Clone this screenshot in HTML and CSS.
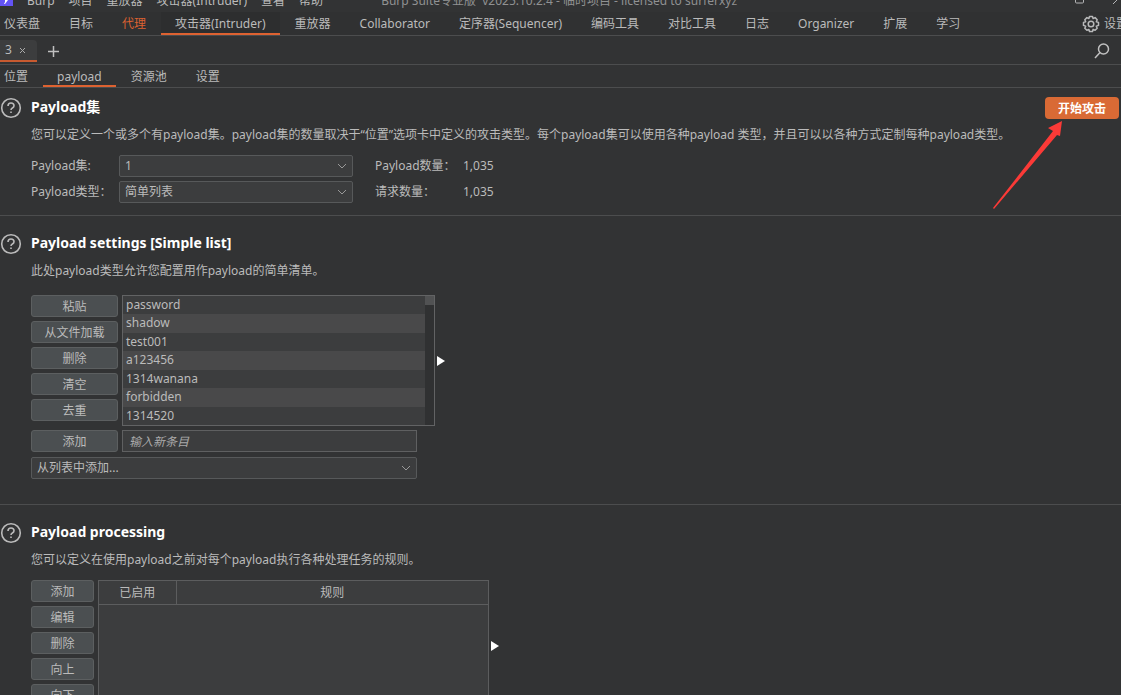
FILE: index.html
```html
<!DOCTYPE html>
<html lang="zh-CN">
<head>
<meta charset="utf-8">
<title>Burp Suite专业版</title>
<link rel="stylesheet" href="styles.css">
</head>
<body>
<div class="app">
  <header class="titlebar">
    <svg class="logo" width="13" height="12" viewBox="0 0 13 12" aria-hidden="true"><path fill="#6353f5" d="M0 0h13v6H0z"/><path fill="#fff" d="M5 0h3L5 4H4l1-2z"/></svg>
    <nav class="menu">
      <button>Burp</button><button>项目</button><button>重放器</button><button>攻击器(Intruder)</button><button>查看</button><button>帮助</button>
    </nav>
    <span class="window-title">Burp Suite专业版&nbsp; v2025.10.2.4 - 临时项目 - licensed to surferxyz</span>
    <svg class="window-controls" width="48" height="16" viewBox="0 0 48 16" fill="none" stroke="#b4b5b6" aria-hidden="true"><path d="M2.500 4v6q0 1 1 1h6q1 0 1-1V4M40 12l8-8 8 8"/></svg>
  </header>

  <nav class="tabs main-tabs">
    <button class="tab">仪表盘</button>
    <button class="tab">目标</button>
    <button class="tab alert">代理</button>
    <button class="tab active">攻击器(Intruder)</button>
    <button class="tab">重放器</button>
    <button class="tab">Collaborator</button>
    <button class="tab">定序器(Sequencer)</button>
    <button class="tab">编码工具</button>
    <button class="tab">对比工具</button>
    <button class="tab">日志</button>
    <button class="tab">Organizer</button>
    <button class="tab">扩展</button>
    <button class="tab">学习</button>
    <button class="settings">
      <svg width="18" height="18" viewBox="0 0 18 18" fill="none" stroke="#b8b9ba" stroke-width="1.500" stroke-linejoin="round" aria-hidden="true"><circle cx="9" cy="9" r="2.800"/><path d="M7.500 1.500h3l.6 2 2-.9 2.100 2.100-.9 2 2.200.7v3l-2.200.8.9 2-2.100 2.100-2-.9-.6 2.100h-3l-.6-2.100-2 .9-2.100-2.100.9-2-2.200-.8v-3l2.200-.7-.9-2 2.100-2.100 2 .9z"/></svg>
      <span>设置</span>
    </button>
  </nav>

  <div class="attack-bar">
    <div class="attack-tab"><span>3</span><button class="close" aria-label="关闭"><svg width="7" height="7" viewBox="0 0 7 7" stroke="#aaa" aria-hidden="true"><path d="M1 1l5 5M6 1L1 6"/></svg></button></div>
    <button class="plain" aria-label="新建"><svg width="13" height="13" viewBox="0 0 13 13" stroke="#c0c0c0" stroke-width="1.500" aria-hidden="true"><path d="M6.500 1v11M1 6.500h11"/></svg></button>
    <button class="plain search" aria-label="搜索"><svg width="16" height="16" viewBox="0 0 16 16" fill="none" stroke="#c0c0c0" stroke-width="1.500" aria-hidden="true"><circle cx="9.500" cy="6" r="5"/><path d="M6 9.500L1 15"/></svg></button>
  </div>

  <nav class="tabs sub-tabs">
    <button class="tab">位置</button>
    <button class="tab active">payload</button>
    <button class="tab">资源池</button>
    <button class="tab">设置</button>
  </nav>

  <main>
    <section class="panel sets">
      <button class="help" aria-label="帮助"><svg width="22" height="22" viewBox="0 0 22 22" fill="none" stroke="#bbb" aria-hidden="true"><circle cx="11" cy="11" r="9.300" stroke-width="1.600"/><path stroke-width="1.600" d="M8 9q0-3 3-3t3 2.700q0 1.400-1.600 2.300Q11 11.800 11 13"/><path stroke-width="1.600" d="M11 14.500v1.600"/></svg></button>
      <div class="content">
        <div class="heading"><h2>Payload集</h2><button class="start">开始攻击</button></div>
        <p>您可以定义一个或多个有payload集。payload集的数量取决于“位置”选项卡中定义的攻击类型。每个payload集可以使用各种payload 类型，并且可以以各种方式定制每种payload类型。</p>
        <div class="form">
          <label for="set">Payload集:</label>
          <div class="dropdown"><select id="set"><option>1</option></select><svg width="10" height="6" viewBox="0 0 10 6" fill="none" stroke="#999" aria-hidden="true"><path d="M1 1l4 4 4-4"/></svg></div>
          <span class="count">Payload数量：</span><span>1,035</span>
          <label for="type">Payload类型：</label>
          <div class="dropdown"><select id="type"><option>简单列表</option></select><svg width="10" height="6" viewBox="0 0 10 6" fill="none" stroke="#999" aria-hidden="true"><path d="M1 1l4 4 4-4"/></svg></div>
          <span class="count">请求数量：</span><span>1,035</span>
        </div>
      </div>
      <svg class="pointer" width="74" height="90" viewBox="0 0 74 90" aria-hidden="true"><path fill="#fb3a37" d="M71 1L57 8l5 3L2 88l1 1L66 15l3 1z"/></svg>
    </section>

    <section class="panel list-settings">
      <button class="help" aria-label="帮助"><svg width="22" height="22" viewBox="0 0 22 22" fill="none" stroke="#bbb" aria-hidden="true"><circle cx="11" cy="11" r="9.300" stroke-width="1.600"/><path stroke-width="1.600" d="M8 9q0-3 3-3t3 2.700q0 1.400-1.600 2.300Q11 11.800 11 13"/><path stroke-width="1.600" d="M11 14.500v1.600"/></svg></button>
      <div class="content">
        <div class="heading"><h2>Payload settings [Simple list]</h2></div>
        <p>此处payload类型允许您配置用作payload的简单清单。</p>
        <div class="list-row">
          <div class="buttons">
            <button class="btn">粘贴</button>
            <button class="btn">从文件加载</button>
            <button class="btn">删除</button>
            <button class="btn">清空</button>
            <button class="btn">去重</button>
          </div>
          <div class="listbox">
            <ul>
              <li>password</li><li>shadow</li><li>test001</li><li>a123456</li><li>1314wanana</li><li>forbidden</li><li>1314520</li>
            </ul>
            <div class="scrollbar"><div class="thumb"></div></div>
          </div>
          <button class="expand" aria-label="展开"><svg width="8" height="10" viewBox="0 0 8 10" aria-hidden="true"><path fill="#fff" d="M0 0l8 5-8 5z"/></svg></button>
        </div>
        <div class="add-row">
          <button class="btn">添加</button>
          <input type="text" placeholder="输入新条目" aria-label="输入新条目">
        </div>
        <div class="dropdown from-list"><select aria-label="从列表中添加"><option>从列表中添加...</option></select><svg width="10" height="6" viewBox="0 0 10 6" fill="none" stroke="#999" aria-hidden="true"><path d="M1 1l4 4 4-4"/></svg></div>
      </div>
    </section>

    <section class="panel processing">
      <button class="help" aria-label="帮助"><svg width="22" height="22" viewBox="0 0 22 22" fill="none" stroke="#bbb" aria-hidden="true"><circle cx="11" cy="11" r="9.300" stroke-width="1.600"/><path stroke-width="1.600" d="M8 9q0-3 3-3t3 2.700q0 1.400-1.600 2.300Q11 11.800 11 13"/><path stroke-width="1.600" d="M11 14.500v1.600"/></svg></button>
      <div class="content">
        <div class="heading"><h2>Payload processing</h2></div>
        <p>您可以定义在使用payload之前对每个payload执行各种处理任务的规则。</p>
        <div class="list-row">
          <div class="buttons">
            <button class="btn">添加</button>
            <button class="btn">编辑</button>
            <button class="btn">删除</button>
            <button class="btn">向上</button>
            <button class="btn">向下</button>
          </div>
          <div class="rules">
            <table>
              <thead><tr><th class="enabled">已启用</th><th>规则</th></tr></thead>
            </table>
          </div>
          <button class="expand" aria-label="展开"><svg width="8" height="10" viewBox="0 0 8 10" aria-hidden="true"><path fill="#fff" d="M0 0l8 5-8 5z"/></svg></button>
        </div>
      </div>
    </section>
  </main>
</div>
</body>
</html>
```

FILE: styles.css
```css
* { box-sizing: border-box; }

body {
  margin: 0;
  background: #323334;
  color: #bbb;
  font: 12px/20px "Noto Sans", "Noto Sans CJK SC", sans-serif;
}

button, input, select {
  margin: 0;
  padding: 0;
  border: 0;
  background: none;
  color: inherit;
  font: inherit;
}

svg { display: block; flex: none; }
h2, p, ul { margin: 0; padding: 0; }

.app {
  display: flex;
  flex-direction: column;
  height: 100vh;
  overflow: hidden;
}

/* title bar */
.titlebar {
  display: flex;
  align-items: flex-end;
  flex: none;
  height: 12px;
  overflow: hidden;
  white-space: nowrap;
}
.menu { display: flex; gap: 14px; margin: 0 58px 0 14px; }
.menu, .window-title { margin-bottom: 1px; }
.window-title { color: #909192; }
.window-controls { margin-left: auto; margin-bottom: 4px; }

/* tab rows */
.tabs {
  display: flex;
  flex: none;
  gap: 1px;
  border-bottom: 1px solid #4c4d4e;
  white-space: nowrap;
}
.tab { padding: 2px 14px 0; border-bottom: 2px solid transparent; }
.tab:first-child { padding-left: 4px; }
.tab.active { border-bottom-color: #de6231; }
.tab.alert { color: #de6231; }
.main-tabs { height: 24px; background: #303132; }
.sub-tabs { height: 23px; }
.main-tabs .active { background: #2d2e2f; }
.settings {
  display: flex;
  align-items: center;
  gap: 4px;
  width: 39px;
  margin-left: auto;
  overflow: hidden;
}

.attack-bar {
  display: flex;
  align-items: center;
  flex: none;
  gap: 10px;
  height: 29px;
  padding: 2px 11px 0 0;
  border-bottom: 1px solid #4c4d4e;
}
.attack-tab {
  display: flex;
  align-items: center;
  gap: 7px;
  height: 22px;
  padding: 0 11px 0 5px;
  border-bottom: 2px solid #c85a30;
  border-radius: 0 4px 0 0;
  background: #3c3d3e;
}
.search { margin-left: auto; }

/* panels */
.panel {
  position: relative;
  display: flex;
  gap: 9px;
  padding: 17px 2px 25px 0;
  border-bottom: 1px solid #4c4d4e;
}
.sets { padding-top: 9px; padding-bottom: 12px; }
.help { align-self: flex-start; }
.content { flex: 1; min-width: 0; }
.heading {
  display: flex;
  align-items: flex-start;
  justify-content: space-between;
  height: 20px;
  margin-bottom: 8px;
}
h2 { color: #fff; font-size: 14px; line-height: 20px; }
.start {
  height: 22px;
  padding: 1px 13px 0;
  border-radius: 4px;
  background: #d96a35;
  color: #fff;
  font-weight: bold;
}
.pointer { position: absolute; top: 32px; right: 56px; }

.form {
  display: grid;
  grid-template-columns: 88px 234px 110px auto;
  justify-content: start;
  align-items: center;
  row-gap: 4px;
  margin-top: 10px;
}
.count { padding-left: 22px; white-space: nowrap; }
.form label { white-space: nowrap; }

.dropdown { display: grid; align-items: center; }
.dropdown > * { grid-area: 1 / 1; }
.dropdown svg { justify-self: end; margin-right: 6px; pointer-events: none; }
select {
  width: 100%;
  height: 22px;
  padding: 0 5px;
  border: 1px solid #57595a;
  border-radius: 2px;
  background: #3c3d3e;
  appearance: none;
}

.btn {
  height: 22px;
  padding-top: 1px;
  border: 1px solid #5c5f60;
  border-radius: 3px;
  background: #4b4f51;
}
.list-row { display: flex; gap: 4px; }
.buttons { display: grid; gap: 4px; width: 87px; align-content: start; }
.expand { width: 8px; }

.list-settings .list-row { margin-top: 14px; }
.listbox {
  display: flex;
  width: 313px;
  height: 131px;
  border: 1px solid #626364;
}
.listbox ul {
  display: grid;
  flex: 1;
  grid-auto-rows: 1fr;
  list-style: none;
  background: #3c3d3e;
  line-height: 18px;
}
.listbox li { padding-left: 3px; }
.listbox li:nth-child(even) { background: #49494a; }
.scrollbar { width: 9px; background: #303132; }
.thumb { height: 9px; background: #515253; }
.list-settings .expand { margin-left: -2px; }

.add-row {
  display: grid;
  grid-template-columns: 87px 295px;
  gap: 4px;
  margin: 4px 0 5px;
}
.add-row input {
  height: 22px;
  padding: 0 6px;
  border: 1px solid #5f6061;
  background: #3c3d3e;
}
.add-row input::placeholder { color: #aaa; font-style: italic; opacity: 1; }
.from-list { width: 386px; }

.processing { border-bottom: 0; }
.processing .list-row { margin-top: 10px; }
.processing .buttons { width: 63px; }
.rules {
  width: 391px;
  min-height: 131px;
  border: 1px solid #5c5d5e;
  background: #3c3d3e;
}
table { width: 100%; border-collapse: collapse; }
th {
  height: 23px;
  padding: 2px 0 0;
  border-bottom: 1px solid #5c5d5e;
  font-weight: normal;
}
.enabled { width: 77px; border-right: 1px solid #5c5d5e; }
.processing .expand { margin-left: -2px; }
```
